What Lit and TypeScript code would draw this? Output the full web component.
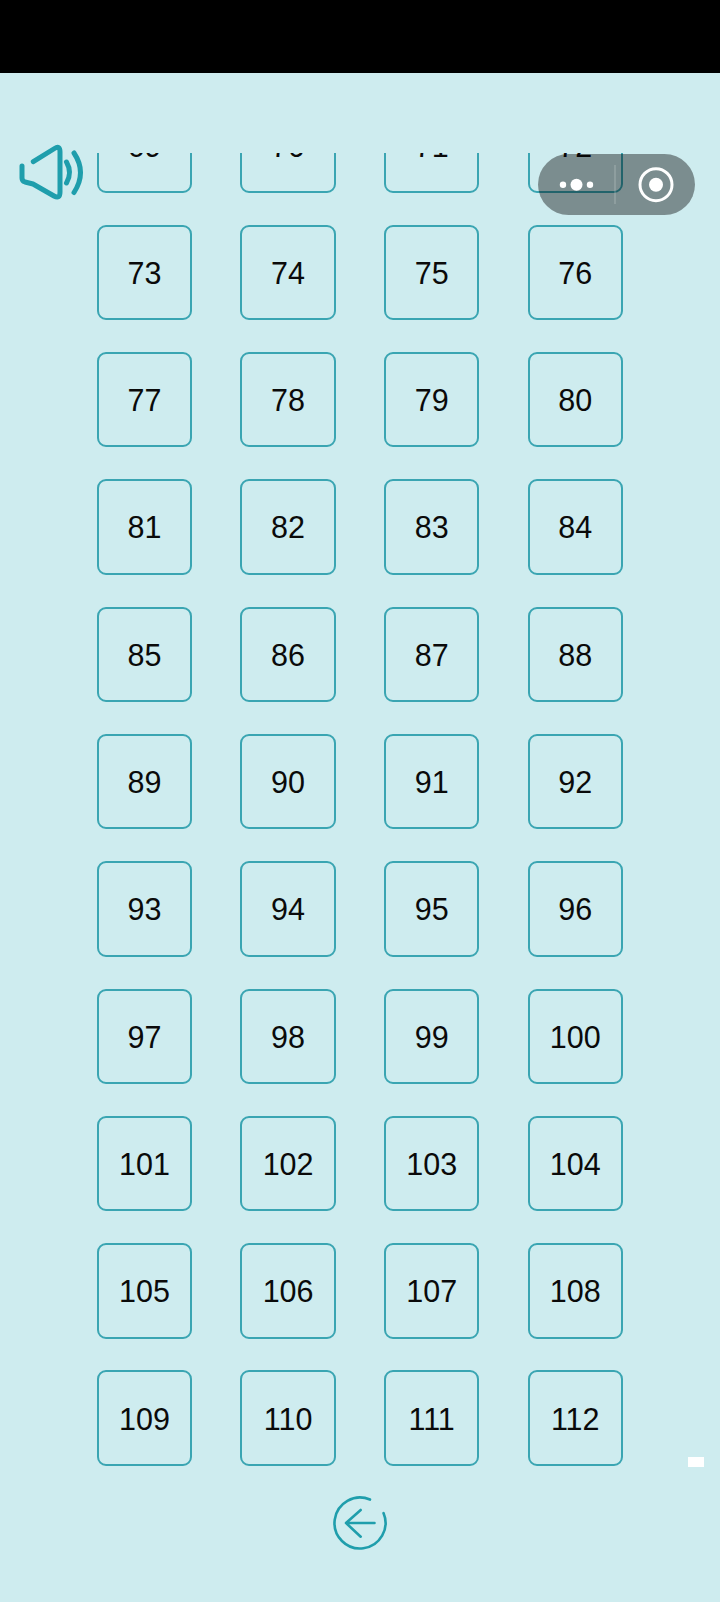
import { LitElement, html, css } from "lit";
import { customElement } from "lit/decorators.js";

const FIRST = 69;
const LAST = 112;

@customElement("app-root")
export class AppRoot extends LitElement {
  static styles = css`
    :host {
      display: block;
      position: relative;
      width: 720px;
      height: 1602px;
      overflow: hidden;
      background: #ceecef;
      font-family: "Liberation Sans", Arial, sans-serif;
      color: #0a0a0a;
    }
    .status {
      height: 73px;
      background: #000;
    }
    .viewport {
      margin-top: 80px;
      height: 1314px;
      overflow: hidden;
    }
    .grid {
      display: grid;
      grid-template-columns: repeat(4, 95.4px);
      column-gap: 48.2px;
      row-gap: 31.93px;
      margin: -55.7px 0 0 96.8px;
    }
    .cell {
      box-sizing: border-box;
      height: 95.4px;
      padding-top: 2px;
      display: flex;
      align-items: center;
      justify-content: center;
      border: 2px solid #3aa5b2;
      border-radius: 9px;
      font-size: 30.5px;
    }
    .back {
      display: flex;
      justify-content: center;
      margin-top: 26px;
    }
    .back svg {
      display: block;
    }
    .speaker {
      position: absolute;
      left: 16px;
      top: 140px;
    }
    .capsule {
      position: absolute;
      left: 538px;
      top: 154px;
      width: 157px;
      height: 61px;
    }
    .scrollbar {
      position: absolute;
      left: 688px;
      top: 1457px;
      width: 16px;
      height: 10px;
      background: #fff;
    }
  `;

  render() {
    const cells = [];
    for (let n = FIRST; n <= LAST; n++) {
      cells.push(html`<div class="cell">${n}</div>`);
    }
    return html`
      <div class="status"></div>
      <div class="viewport">
        <div class="grid">${cells}</div>
      </div>
      <div class="back">
        <svg width="60" height="60" viewBox="0 0 60 60" fill="none" stroke="#1f9eac" stroke-width="2.6" stroke-linecap="round" stroke-linejoin="round">
          <path d="M40 6.550A25.500 25.500 0 1 0 53.500 20.100" />
          <path d="M16 30H44.500M30.700 17 16 30 30.700 43.700" />
        </svg>
      </div>
      <svg class="speaker" width="72" height="64" viewBox="16 140 72 64" fill="none" stroke="#1f9eac" stroke-width="5" stroke-linecap="round" stroke-linejoin="round">
        <path d="M33.300 161.700 54.500 148.500Q60 145 60 152V192Q60 199.500 54 196L33 184 25 182Q22 181 22 178V166" />
        <path d="M66.500 162Q72.500 172.500 66.500 183" />
        <path d="M74 153Q87 172.500 74 192.500" />
      </svg>
      <svg class="capsule" viewBox="0 0 157 61">
        <rect width="157" height="61" rx="30.500" fill="#000" fill-opacity="0.4" />
        <circle cx="25" cy="30.700" r="3.200" fill="#fff" />
        <circle cx="38.500" cy="30.700" r="6" fill="#fff" />
        <circle cx="52" cy="30.700" r="3.200" fill="#fff" />
        <rect x="76.500" y="11" width="1" height="39" fill="#fff" fill-opacity="0.3" />
        <circle cx="118" cy="30.700" r="16" fill="none" stroke="#fff" stroke-width="3" />
        <circle cx="118" cy="30.700" r="7" fill="#fff" />
      </svg>
      <div class="scrollbar"></div>
    `;
  }
}
